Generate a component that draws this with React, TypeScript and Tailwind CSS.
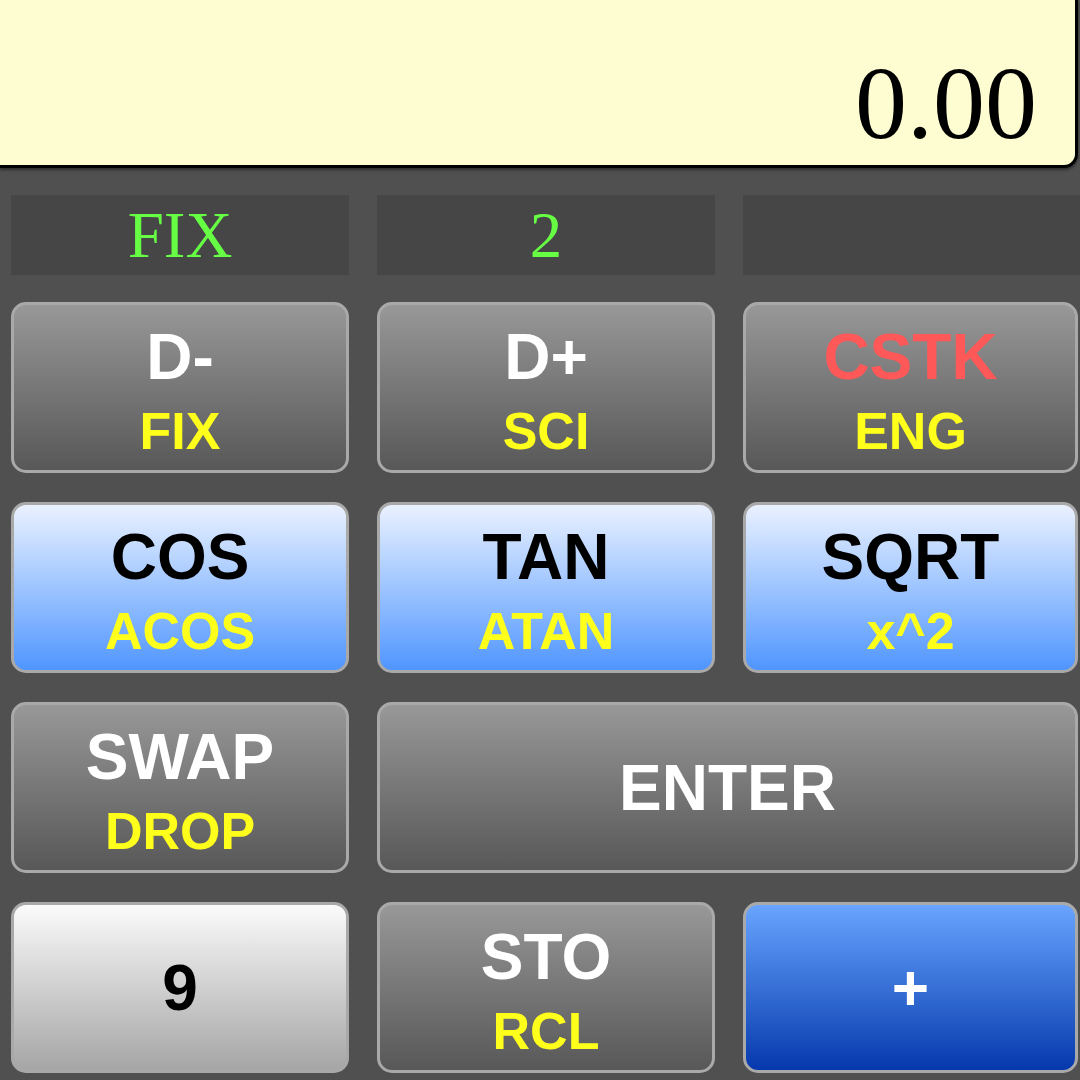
import React from "react";

type Kind = "gray" | "light" | "blue" | "white";

const kindCls: Record<Kind, string> = {
  gray: "bg-gradient-to-b from-[#989898] to-[#585858]",
  light: "bg-gradient-to-b from-[#eaf1ff] to-[#4f95ff]",
  blue: "bg-gradient-to-b from-[#69a4ff] to-[#0638ad]",
  white: "bg-gradient-to-b from-[#fbfbfb] to-[#a6a6a6]",
};

function Key({
  main,
  sub,
  kind = "gray",
  mainColor = "text-white",
  className = "",
}: {
  main: string;
  sub?: string;
  kind?: Kind;
  mainColor?: string;
  className?: string;
}) {
  return (
    <div
      className={`h-[171px] rounded-[15px] border-[3px] border-[#a9a9a9] flex flex-col items-center justify-center ${sub ? "pt-[6px]" : ""} ${kindCls[kind]} ${className}`}
    >
      <div className={`text-[64px] leading-[64px] font-bold ${mainColor}`}>{main}</div>
      {sub && (
        <div className="text-[52px] leading-[52px] font-bold text-[#ffff1c] mt-[16px]">{sub}</div>
      )}
    </div>
  );
}

export default function App() {
  return (
    <div
      className="w-[1080px] h-[1080px] bg-[#505050] overflow-hidden"
      style={{ fontFamily: '"Liberation Sans", Arial, sans-serif' }}
    >
      <div className="w-[1078px] h-[168px] bg-[#fdfdd1] border-b-[3px] border-r-[3px] border-black rounded-br-[14px] shadow-[0_2px_3px_rgba(0,0,0,0.45)] flex items-end justify-end pr-[38px] pb-[10px]">
        <span
          className="text-[104px] leading-[104px] text-black"
          style={{ fontFamily: '"Liberation Serif", "Times New Roman", serif' }}
        >
          0.00
        </span>
      </div>

      <div
        className="grid grid-cols-[338px_338px_337px] gap-x-[28px] pl-[11px] mt-[27px]"
        style={{ fontFamily: '"Liberation Serif", "Times New Roman", serif' }}
      >
        <div className="h-[80px] bg-[#464646] flex items-center justify-center text-[65px] leading-none text-[#66ff44]">
          FIX
        </div>
        <div className="h-[80px] bg-[#464646] flex items-center justify-center text-[65px] leading-none text-[#66ff44]">
          2
        </div>
        <div className="h-[80px] bg-[#464646]" />
      </div>

      <div className="grid grid-cols-[338px_338px_335px] gap-x-[28px] gap-y-[29px] pl-[11px] mt-[27px]">
        <Key main="D-" sub="FIX" />
        <Key main="D+" sub="SCI" />
        <Key main="CSTK" sub="ENG" mainColor="text-[#ff5858]" />

        <Key main="COS" sub="ACOS" kind="light" mainColor="text-black" />
        <Key main="TAN" sub="ATAN" kind="light" mainColor="text-black" />
        <Key main="SQRT" sub="x^2" kind="light" mainColor="text-black" />

        <Key main="SWAP" sub="DROP" />
        <Key main="ENTER" className="col-span-2" />

        <Key main="9" kind="white" mainColor="text-black" />
        <Key main="STO" sub="RCL" />
        <Key main="+" kind="blue" />
      </div>
    </div>
  );
}
